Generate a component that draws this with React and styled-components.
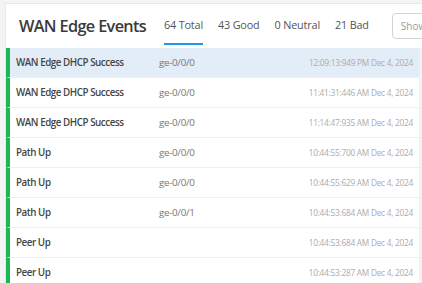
import React, { useState } from "react";
import styled, { createGlobalStyle } from "styled-components";

const GlobalStyle = createGlobalStyle`
  html, body {
    margin: 0;
    padding: 0;
    background: #f4f4f4;
    font-family: "Open Sans", "Liberation Sans", sans-serif;
    overflow: hidden;
  }
`;

const events = [
  { name: "WAN Edge DHCP Success", port: "ge-0/0/0", time: "12:09:13:949 PM Dec 4, 2024" },
  { name: "WAN Edge DHCP Success", port: "ge-0/0/0", time: "11:41:31:446 AM Dec 4, 2024" },
  { name: "WAN Edge DHCP Success", port: "ge-0/0/0", time: "11:14:47:935 AM Dec 4, 2024" },
  { name: "Path Up", port: "ge-0/0/0", time: "10:44:55:700 AM Dec 4, 2024" },
  { name: "Path Up", port: "ge-0/0/0", time: "10:44:55:629 AM Dec 4, 2024" },
  { name: "Path Up", port: "ge-0/0/1", time: "10:44:53:684 AM Dec 4, 2024" },
  { name: "Peer Up", port: "", time: "10:44:53:684 AM Dec 4, 2024" },
  { name: "Peer Up", port: "", time: "10:44:53:287 AM Dec 4, 2024" },
];

const tabs = ["64 Total", "43 Good", "0 Neutral", "21 Bad"];

export default function App() {
  const [activeTab, setActiveTab] = useState(0);
  const [selected, setSelected] = useState(0);

  return (
    <>
      <GlobalStyle />
      <Page>
        <Card>
          <Header>
            <Title>WAN Edge Events</Title>
            <Tabs>
              {tabs.map((t, i) => (
                <Tab key={t} $active={i === activeTab} onClick={() => setActiveTab(i)}>
                  {t}
                </Tab>
              ))}
            </Tabs>
            <ShowButton>Show</ShowButton>
          </Header>
          <List>
            {events.map((e, i) => (
              <Row key={i} $selected={i === selected} onClick={() => setSelected(i)}>
                <EventName>{e.name}</EventName>
                <Port>{e.port}</Port>
                <Time>{e.time}</Time>
              </Row>
            ))}
          </List>
        </Card>
      </Page>
    </>
  );
}

const Page = styled.div`
  padding: 3px 0 0 5px;
  height: 280px;
`;

const Card = styled.div`
  background: #ffffff;
  border-top: 1px solid #e8e8e8;
  border-left: 1px solid #e8e8e8;
  height: 100%;
  width: 430px;
`;

const Header = styled.div`
  display: flex;
  align-items: center;
  height: 44px;
  padding-left: 13px;
`;

const Title = styled.h2`
  margin: 0;
  flex-shrink: 0;
  font-size: 16.3px;
  font-weight: 600;
  letter-spacing: -0.65px;
  color: #3a3a3a;
  width: 145px;
  white-space: nowrap;
`;

const Tabs = styled.div`
  display: flex;
  flex-shrink: 0;
  gap: 15px;
  align-self: stretch;
`;

const Tab = styled.div`
  display: flex;
  align-items: center;
  white-space: nowrap;
  font-size: 10.8px;
  letter-spacing: -0.15px;
  color: #555;
  cursor: pointer;
  border-bottom: 2px solid ${(p) => (p.$active ? "#1c9be4" : "transparent")};
  padding-top: 2px;
  margin-bottom: 3px;
`;

const ShowButton = styled.button`
  margin-left: 23px;
  height: 26px;
  width: 50px;
  flex-shrink: 0;
  border: 1px solid #d4d4d4;
  border-radius: 4px;
  background: #fff;
  color: #9a9a9a;
  font-family: inherit;
  font-size: 10px;
  text-align: left;
  padding: 0 8px;
`;

const List = styled.div`
  width: 413px;
  border-right: 4px solid #f2f2f2;
`;

const Row = styled.div`
  display: grid;
  grid-template-columns: 143px 1fr auto;
  align-items: center;
  height: 29px;
  border-left: 4px solid #1cb854;
  border-bottom: 1px solid #efefef;
  padding: 0 6px 0 6px;
  background: ${(p) => (p.$selected ? "#e3edf7" : "#ffffff")};
  cursor: pointer;
`;

const EventName = styled.div`
  font-size: 9.8px;
  font-weight: 600;
  letter-spacing: -0.45px;
  color: #454545;
  white-space: nowrap;
`;

const Port = styled.div`
  font-size: 9.8px;
  letter-spacing: -0.3px;
  color: #777;
`;

const Time = styled.div`
  font-size: 8.3px;
  letter-spacing: -0.25px;
  color: #ababab;
  white-space: nowrap;
`;
